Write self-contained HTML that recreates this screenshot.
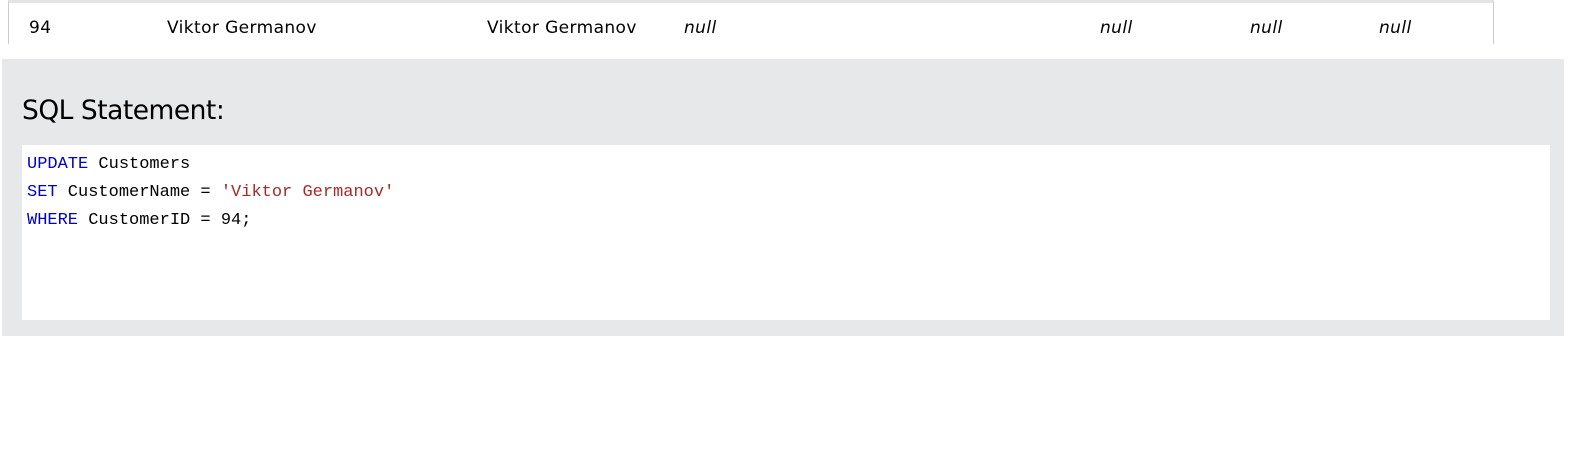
<!DOCTYPE html>
<html><head><style>
body{margin:0;width:1569px;height:462px;background:#fff;position:relative;font-family:"Liberation Sans",sans-serif;overflow:hidden}
.tbl{position:absolute;left:8px;top:0;width:1486px;height:44px;border-left:1px solid #ccc;border-right:1px solid #ccc;border-top:3px solid #e4e4e4;box-sizing:border-box}
.c{position:absolute;top:18px;font-size:17px;color:#000;font-family:"DejaVu Sans",sans-serif;letter-spacing:0.4px}
.i{font-style:italic}
.panel{position:absolute;left:2px;top:59px;width:1562px;height:277px;background:#e7e8ea}
h2{position:absolute;left:22px;top:95px;margin:0;font-weight:normal;font-size:26.5px;color:#000;font-family:"DejaVu Sans","Liberation Sans",sans-serif;letter-spacing:-0.5px}
.code{position:absolute;left:22px;top:145px;width:1528px;height:175px;background:#fff;font-family:"Liberation Mono",monospace;font-size:17px;line-height:28px;padding:6px 5px 0;box-sizing:border-box;color:#000}
.k{color:#0000cd}.s{color:#a52a2a}
</style></head><body>
<div class="tbl"></div>
<div class="c" style="left:29px">94</div>
<div class="c" style="left:167px">Viktor Germanov</div>
<div class="c" style="left:487px">Viktor Germanov</div>
<div class="c i" style="left:684px">null</div>
<div class="c i" style="left:1100px">null</div>
<div class="c i" style="left:1250px">null</div>
<div class="c i" style="left:1379px">null</div>
<div class="panel"></div>
<h2>SQL Statement:</h2>
<div class="code"><span class="k">UPDATE</span> Customers<br><span class="k">SET</span> CustomerName = <span class="s">'Viktor Germanov'</span><br><span class="k">WHERE</span> CustomerID = 94;</div>
</body></html>
